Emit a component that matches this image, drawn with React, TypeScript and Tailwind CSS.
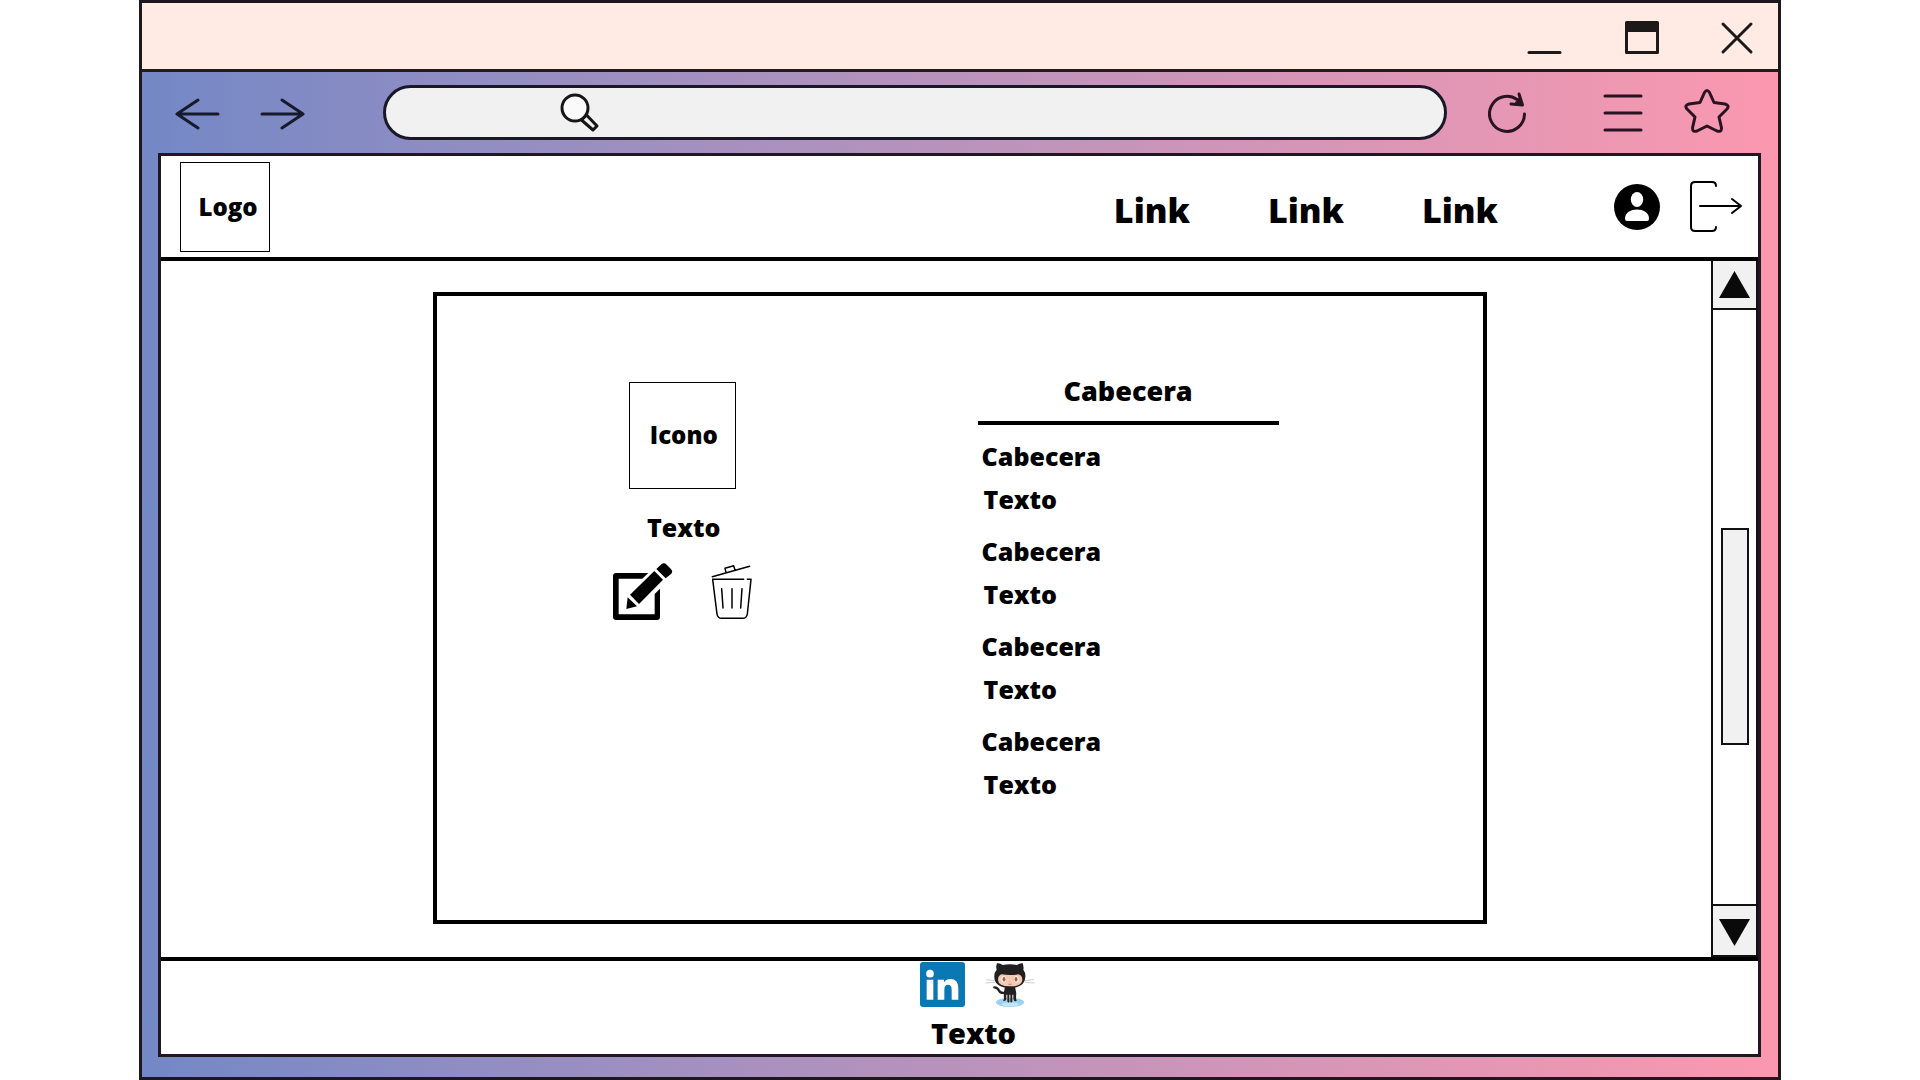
import React from "react";

const line = { fill: "none", stroke: "currentColor", strokeWidth: 3, strokeLinecap: "round", strokeLinejoin: "round" } as const;

function TitleBar() {
  return (
    <div className="flex h-[69px] items-center justify-end border-b-3 border-[#231a1a] bg-[#ffeae4] pr-6 pt-1 text-[#1c1a19]">
      <button aria-label="Minimizar">
        <svg width="36" height="34" viewBox="0 0 36 34" {...line}><path d="M3 31.500H34" /></svg>
      </button>
      <button aria-label="Maximizar" className="ml-[63px]">
        <svg width="34" height="34" viewBox="0 0 34 34">
          <path d="M1.500 1.500H32.500V31.500H1.500Z" {...line} />
          <path d="M1 1H33V11H1Z" fill="currentColor" />
        </svg>
      </button>
      <button aria-label="Cerrar" className="ml-[61px]">
        <svg width="34" height="34" viewBox="0 0 34 34" {...line}><path d="M3 3L31 31M31 3L3 31" /></svg>
      </button>
    </div>
  );
}

function Toolbar() {
  return (
    <div className="flex h-[81px] items-center pl-8 pr-12 text-[#2a1320]">
      <div className="flex gap-10 pt-0.5 text-[#171a2c]">
        <button aria-label="Atrás">
          <svg width="46" height="32" viewBox="0 0 46 32" {...line}><path d="M24 2L3 16L24 30M3 16H44" /></svg>
        </button>
        <button aria-label="Adelante">
          <svg width="46" height="32" viewBox="0 0 46 32" {...line}><path d="M22 2L43 16L22 30M43 16H2" /></svg>
        </button>
      </div>
      <label className="ml-[77px] flex h-[55px] flex-1 items-center rounded-full border-3 border-[#1a1828] bg-[#f1f1f1] pl-[174px] text-[#161616]">
        <svg width="40" height="40" viewBox="0 0 40 40" fill="none" stroke="currentColor" strokeWidth="3" strokeLinejoin="round">
          <circle cx="15" cy="15" r="13" fill="#fafafa" />
          <path d="M21.500 27L26.500 22L37 33L33 37Z" />
        </svg>
        <input aria-label="Buscar" className="min-w-0 flex-1 bg-transparent px-3 font-['Open_Sans',sans-serif] text-xl outline-none" />
      </label>
      <button aria-label="Recargar" className="ml-[41px]">
        <svg width="40" height="42" viewBox="0 0 40 42" {...line}>
          <path d="M36.500 22A17.500 17.500 0 1 1 29 7.500" />
          <path d="M31 2L34.500 13L23 12" />
          <path d="M31 6L34.500 13L27 12Z" fill="currentColor" strokeWidth="1" />
        </svg>
      </button>
      <button aria-label="Menú" className="ml-[74px]">
        <svg width="42" height="38" viewBox="0 0 42 38" {...line}><path d="M3 2H39M3 19H39M3 36H39" /></svg>
      </button>
      <button aria-label="Favoritos" className="ml-10 pb-1">
        <svg width="46" height="46" viewBox="0 0 46 46" {...line}>
          <path d="M20.500 4.500Q23 .5 25.500 4.500L30 14.500L41 16Q46 17.500 43 21L35 29L37.500 40Q37.500 44.500 33 43L23 38L13 43Q8.500 44.500 8.500 40L11 29L3 21Q0 17.500 5 16L16 14.500Z" />
        </svg>
      </button>
    </div>
  );
}

function Header() {
  return (
    <header className="flex h-[105px] items-center border-b-4 border-black pl-[19px] pr-4">
      <div className="flex size-[90px] items-center justify-center border border-black pl-1.5 text-2xl">Logo</div>
      <nav className="ml-auto flex gap-[78px] pt-2 text-[34px]">
        <a href="#uno">Link</a>
        <a href="#dos">Link</a>
        <a href="#tres">Link</a>
      </nav>
      <button aria-label="Perfil" className="ml-[116px]">
        <svg width="46" height="46" viewBox="0 0 46 46">
          <circle cx="23" cy="23" r="23" />
          <ellipse cx="23" cy="15.500" rx="6.200" ry="7.500" fill="white" />
          <path d="M11 34.500C11 22.500 35 22.500 35 34.500Q35 37 33 37H13Q11 37 11 34.500Z" fill="white" />
        </svg>
      </button>
      <button aria-label="Cerrar sesión" className="ml-[30px] pb-0.5">
        <svg width="52" height="52" viewBox="0 0 52 52" {...line} strokeWidth="2">
          <path d="M26 6Q26 2 22 2H5Q1 2 1 6V47Q1 51 5 51H22Q26 51 26 47M10 26H51M42 19L51 26L42 33" />
        </svg>
      </button>
    </header>
  );
}

const sections = ["uno", "dos", "tres", "cuatro"];

function Card() {
  return (
    <section className="flex flex-1 border-4 border-black">
      <div className="flex w-[47%] flex-col items-center pt-[86px]">
        <div className="flex size-[107px] items-center justify-center border border-black pb-0.5 pl-0.5 text-2xl">Icono</div>
        <p className="mt-5 pl-0.5 text-[25px] leading-9">Texto</p>
        <div className="mt-[17px] flex items-center gap-[38px] pr-0.5">
          <button aria-label="Editar">
            <svg width="62" height="60" viewBox="0 0 186 180">
              <path d="M112 33H16Q6 33 6 43V165Q6 174 16 174H138Q147 174 147 165V80L131 96V157H23V50H94Z" />
              <path d="M46 141L50 106L78 133Z" />
              <path d="M57 98L130 27L156 53L84 126Z" />
              <path d="M136 21L152 6Q160 1 167 8L179 20Q187 28 181 35L164 49Z" />
            </svg>
          </button>
          <button aria-label="Eliminar">
            <svg width="42" height="56" viewBox="0 0 126 168" fill="none" stroke="black" strokeWidth="4.500" strokeLinecap="round" strokeLinejoin="round">
              <path d="M4 38L116 7M45 25L42 13L68 5L72 18M5 46H98M109 46H120L109 150Q107 163 95 163H32Q20 163 18 150L5 46M32 74L36 132M63 74V132M93 74L89 132" />
            </svg>
          </button>
        </div>
      </div>
      <div className="ml-[49px] w-[301px] pt-[75px]">
        <h2 className="border-b-4 border-black pb-2.5 text-center text-[27px] leading-10">Cabecera</h2>
        <dl className="flex flex-col gap-[9px] pl-1 pt-2.5 text-[25px] leading-[43px]">
          {sections.map((s) => (
            <div key={s}>
              <dt>Cabecera</dt>
              <dd className="pl-0.5">Texto</dd>
            </div>
          ))}
        </dl>
      </div>
    </section>
  );
}

function ScrollBar() {
  return (
    <div className="flex w-[47px] flex-col items-center border-x-2 border-b-2 border-[#111]">
      <button aria-label="Subir" className="flex h-[49px] w-full items-center justify-center border-b-2 border-[#111] bg-[#f1f1f1]">
        <svg width="31" height="27" viewBox="0 0 31 27"><path d="M15.500 0L31 27H0Z" fill="#0a0a0a" /></svg>
      </button>
      <div className="flex w-full flex-1 flex-col items-center">
        <div className="grow-[218]" />
        <div className="h-[217px] w-7 border-2 border-[#111] bg-[#f1f1f1]" />
        <div className="grow-[159]" />
      </div>
      <button aria-label="Bajar" className="flex h-[51px] w-full items-center justify-center border-t-2 border-[#111] bg-[#f1f1f1] pt-1">
        <svg width="31" height="27" viewBox="0 0 31 27"><path d="M0 0H31L15.500 27Z" fill="#0a0a0a" /></svg>
      </button>
    </div>
  );
}

function Octocat() {
  return (
    <svg width="50" height="46" viewBox="0 0 150 138">
      <ellipse cx="75" cy="121" rx="42" ry="14" fill="#9bd3ee" />
      <ellipse cx="76" cy="127" rx="26" ry="6" fill="#c3e6f5" />
      <path d="M28 76Q38 76 42 86Q47 95 60 92" fill="none" stroke="#221f20" strokeWidth="7" strokeLinecap="round" />
      <path d="M60 74H90Q96 92 93 112Q98 116 92 118Q86 118 85 110V98H82V118Q80 124 76 120V98H73V120Q69 124 67 118V98H64V112Q62 118 56 117Q52 115 57 111Q54 92 60 74Z" fill="#221f20" />
      <path d="M36 4Q44 2 53 9Q74 4 96 9Q106 2 113 4Q117 14 115 23Q122 31 121 46Q119 77 75 78Q29 77 28 46Q27 31 35 23Q32 14 36 4Z" fill="#221f20" />
      <path d="M50 37Q75 41 100 37Q112 40 112 54Q110 73 75 73Q40 73 39 54Q39 40 50 37Z" fill="#f4cbb2" />
      <ellipse cx="56" cy="52" rx="7" ry="9.500" fill="white" />
      <ellipse cx="94" cy="52" rx="7" ry="9.500" fill="white" />
      <ellipse cx="57" cy="52" rx="4.500" ry="7" fill="#ad5c51" />
      <ellipse cx="93" cy="52" rx="4.500" ry="7" fill="#ad5c51" />
      <path d="M70 66Q75 69 80 66M74 60H76" fill="none" stroke="#ad5c51" strokeWidth="2" />
      <path d="M30 56L4 53M30 61L2 63M120 56L146 53M120 61L148 63" stroke="#b9b4b2" strokeWidth="2" />
    </svg>
  );
}

function Footer() {
  return (
    <footer className="flex h-[97px] flex-col items-center border-t-4 border-black pl-7 pt-px">
      <div className="flex gap-5 pl-2">
        <a href="#linkedin" aria-label="LinkedIn">
          <svg width="45" height="45" viewBox="0 0 135 135">
            <rect width="135" height="135" rx="9" fill="#0a78b5" />
            <g fill="white">
              <circle cx="30" cy="35" r="11.500" />
              <path d="M20 53H40V113H20ZM53 53H72V61Q79 51 91 51Q115 51 115 79V113H95V83Q95 68 84 68Q73 68 73 83V113H53Z" />
            </g>
          </svg>
        </a>
        <a href="#github" aria-label="GitHub"><Octocat /></a>
      </div>
      <p className="mt-[5px] text-[29px] leading-10">Texto</p>
    </footer>
  );
}

export default function App() {
  return (
    <div className="min-h-screen bg-white px-[139px] font-['Open_Sans',sans-serif] font-extrabold text-black">
      <div className="flex min-h-screen flex-col border-3 border-[#1d181e] bg-linear-to-r from-[#7388c6] to-[#fb98af]">
        <TitleBar />
        <Toolbar />
        <div className="mb-5 ml-4 mr-[17px] flex flex-1 flex-col border-3 border-[#211723] bg-white">
          <Header />
          <main className="flex flex-1">
            <div className="flex flex-1 pb-[33px] pl-[272px] pr-56 pt-[31px]">
              <Card />
            </div>
            <ScrollBar />
          </main>
          <Footer />
        </div>
      </div>
    </div>
  );
}
